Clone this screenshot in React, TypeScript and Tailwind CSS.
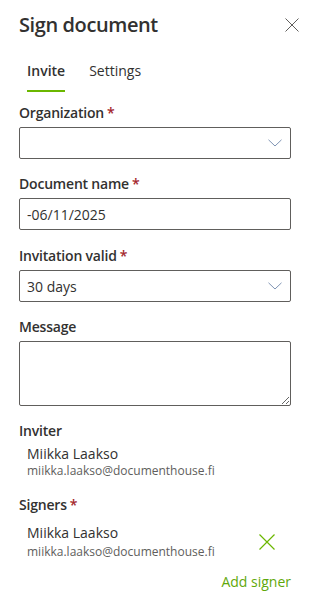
import { ReactNode } from 'react';

function Required() {
    return <span className="text-[#a4262c] pl-[3px]">*</span>;
}

function FieldLabel({ children, required }: { children: ReactNode; required?: boolean }) {
    return (
        <label className="block pt-[5px] pb-[4px] text-[14px] leading-[20px] font-semibold text-[#323130] tracking-[-0.2px]">
            {children}
            {required && <Required />}
        </label>
    );
}

function Chevron() {
    return (
        <svg width="14" height="8" viewBox="0 0 14 8" fill="none" stroke="#7f93b3" strokeWidth="1">
            <polyline points="0.5,0.8 7,7 13.5,0.8" />
        </svg>
    );
}

function Dropdown({ value }: { value?: string }) {
    return (
        <div className="h-[32px] flex items-center justify-between border border-[#605e5c] rounded-[2px] pl-[7px] pr-[8px]">
            <span className="text-[14px] text-[#323130]">{value}</span>
            <Chevron />
        </div>
    );
}

function Person({ name, email }: { name: string; email: string }) {
    return (
        <div className="pl-[8px]">
            <div className="text-[14px] leading-[18px] text-[#323130]">{name}</div>
            <div className="text-[12px] leading-[16px] text-[#605e5c]">{email}</div>
        </div>
    );
}

export default function App() {
    return (
        <div className="min-h-screen bg-white pl-[19px] pr-[21px] text-[#323130] font-['Segoe_UI','Open_Sans',sans-serif]">
            {/* Header */}
            <div className="flex items-center justify-between pt-[11px]">
                <h1 className="text-[20px] leading-[28px] font-semibold tracking-[-0.4px]">Sign document</h1>
                <button className="mr-[-8px] w-[14px] h-[14px] flex items-center justify-center text-[#605e5c]">
                    <svg width="14" height="14" viewBox="0 0 14 14" stroke="currentColor" strokeWidth="1">
                        <path d="M0.5 0.5L13.5 13.5M13.5 0.5L0.5 13.5" />
                    </svg>
                </button>
            </div>

            {/* Tabs */}
            <div className="flex mt-[10px] h-[44px]">
                <button className="relative px-[8px] mr-[8px] text-[14px] leading-[20px] font-semibold text-[#323130]">
                    Invite
                    <span className="absolute left-[8px] right-[8px] bottom-[1px] h-[2px] bg-[#6bb700]" />
                </button>
                <button className="relative px-[8px] text-[14px] leading-[20px] text-[#323130]">Settings</button>
            </div>

            <div className="mt-[5px]">
                <FieldLabel required>Organization</FieldLabel>
                <Dropdown />
            </div>

            <div className="mt-[10px]">
                <FieldLabel required>Document name</FieldLabel>
                <input
                    defaultValue="-06/11/2025"
                    className="w-full h-[32px] border border-[#605e5c] rounded-[2px] pl-[7px] text-[14px] text-[#323130] outline-none"
                />
            </div>

            <div className="mt-[11px]">
                <FieldLabel required>Invitation valid</FieldLabel>
                <Dropdown value="30 days" />
            </div>

            <div className="mt-[10px]">
                <FieldLabel>Message</FieldLabel>
                <textarea className="block w-full h-[65px] border border-[#605e5c] rounded-[2px] px-[7px] py-[5px] text-[14px] outline-none" />
            </div>

            <div className="mt-[10px]">
                <FieldLabel>Inviter</FieldLabel>
                <Person name="Miikka Laakso" email="miikka.laakso@documenthouse.fi" />
            </div>

            <div className="mt-[11px]">
                <FieldLabel required>Signers</FieldLabel>
                <div className="flex items-center justify-between pt-[4px] pr-[8px]">
                    <div className="pl-[8px]">
                        <div className="text-[14px] leading-[20px] text-[#323130]">Miikka Laakso</div>
                        <div className="text-[12px] leading-[17px] text-[#605e5c]">miikka.laakso@documenthouse.fi</div>
                    </div>
                    <button className="w-[32px] h-[32px] flex items-center justify-center text-[#6bb700]">
                        <svg width="16" height="16" viewBox="0 0 16 16" stroke="currentColor" strokeWidth="1.2">
                            <path d="M0.5 0.5L15.5 15.5M15.5 0.5L0.5 15.5" />
                        </svg>
                    </button>
                </div>
                <div className="flex justify-end mt-[12px]">
                    <button className="text-[14px] leading-[20px] text-[#5fa80a]">Add signer</button>
                </div>
            </div>
        </div>
    );
}
